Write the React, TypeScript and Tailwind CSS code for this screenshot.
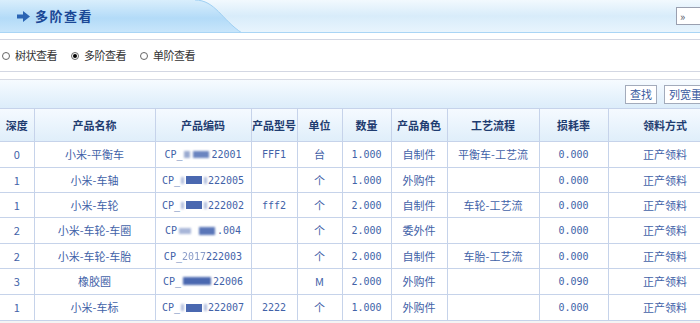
import React from "react";

const F = { fontFamily: '"Noto Sans CJK SC", "Noto Sans", sans-serif' } as React.CSSProperties;
const M = { fontFamily: '"DejaVu Sans Mono", monospace' } as React.CSSProperties;

type Row = { d: string; name: string; a: string; b: string; c: string; model: string; unit: string; qty: string; role: string; flow: string; loss: string; h: string };

const rows: Row[] = [
  { d: "0", name: "小米-平衡车", a: "CP_", b: "a", c: "22001", model: "FFF1", unit: "台", qty: "1.000", role: "自制件", flow: "平衡车-工艺流", loss: "0.000", h: "h-[26px]" },
  { d: "1", name: "小米-车轴", a: "CP_", b: "b", c: "222005", model: "", unit: "个", qty: "1.000", role: "外购件", flow: "", loss: "0.000", h: "h-[25px]" },
  { d: "1", name: "小米-车轮", a: "CP_", b: "b", c: "222002", model: "fff2", unit: "个", qty: "2.000", role: "自制件", flow: "车轮-工艺流", loss: "0.000", h: "h-[25px]" },
  { d: "2", name: "小米-车轮-车圈", a: "CP", b: "c", c: ".004", model: "", unit: "个", qty: "2.000", role: "委外件", flow: "", loss: "0.000", h: "h-[26px]" },
  { d: "2", name: "小米-车轮-车胎", a: "CP_", b: "d", c: "222003", model: "", unit: "个", qty: "2.000", role: "自制件", flow: "车胎-工艺流", loss: "0.000", h: "h-[25px]" },
  { d: "3", name: "橡胶圈", a: "CP_", b: "e", c: "22006", model: "", unit: "M", qty: "2.000", role: "外购件", flow: "", loss: "0.090", h: "h-[26px]" },
  { d: "1", name: "小米-车标", a: "CP_", b: "b", c: "222007", model: "2222", unit: "个", qty: "1.000", role: "外购件", flow: "", loss: "0.000", h: "h-[26px]" },
];

function Blur({ k }: { k: string }) {
  if (k === "a")
    return (
      <span className="inline-flex items-center gap-[3px] mx-[2px]">
        <span className="inline-block w-[6px] h-[7px] bg-[#9aaad0] blur-[1px]" />
        <span className="inline-block w-[16px] h-[7px] bg-[#6a84c0] blur-[1px]" />
      </span>
    );
  if (k === "c")
    return (
      <span className="inline-flex items-center gap-[8px] mx-[2px]">
        <span className="inline-block w-[12px] h-[6px] bg-[#a8b6d8] blur-[1px]" />
        <span className="inline-block w-[16px] h-[8px] bg-[#5a76b8] blur-[1px]" />
      </span>
    );
  if (k === "d") return <span className="text-[#8a9cc8] blur-[0.5px]">2017</span>;
  if (k === "e") return <span className="inline-block w-[28px] h-[8px] mx-[2px] bg-[#4a68b0] blur-[1px]" />;
  return (
    <span className="inline-flex items-center mx-[1px] gap-[2px]">
      <span className="inline-block w-[3px] h-[7px] bg-[#b0bcdc] blur-[1px]" />
      <span className="inline-block w-[16px] h-[8px] bg-[#4a68b0] blur-[0.5px]" />
      <span className="inline-block w-[3px] h-[7px] bg-[#b0bcdc] blur-[1px]" />
    </span>
  );
}

function Radio({ on, label }: { on?: boolean; label: string }) {
  return (
    <div className="flex items-center gap-[5px]">
      <span className="w-[8px] h-[8px] rounded-full border border-[#666] bg-white flex items-center justify-center">
        {on && <span className="w-[4px] h-[4px] rounded-full bg-black" />}
      </span>
      <span className="text-[11px] text-[#333] leading-none tracking-[-0.5px]">{label}</span>
    </div>
  );
}

const cols = [34, 121, 96, 46, 45, 49, 56, 92, 69, 114];
const heads = ["深度", "产品名称", "产品编码", "产品型号", "单位", "数量", "产品角色", "工艺流程", "损耗率", "领料方式"];

export default function App() {
  return (
    <div className="w-[700px] h-[323px] overflow-hidden bg-[#f4f4f4] relative" style={F}>
      <div className="bg-white">
        {/* title bar */}
        <div className="relative h-[33px] border-b border-[#a9d5f5] bg-gradient-to-b from-[#f2f9fe] via-[#d8ecfa] to-[#e8f4fd] overflow-hidden">
          <svg className="absolute left-0 top-0" width="260" height="33" viewBox="0 0 260 33">
            <defs>
              <linearGradient id="lg" x1="0" y1="0" x2="0" y2="1">
                <stop offset="0" stopColor="#d9eefc" />
                <stop offset="0.55" stopColor="#b3dbf8" />
                <stop offset="1" stopColor="#c9e6fb" />
              </linearGradient>
            </defs>
            <path d="M0 0 H195 C215 0 222 20 242 33 H0 Z" fill="url(#lg)" />
            <path d="M195 0 C215 0 222 20 242 33" fill="none" stroke="#9fd0f3" strokeWidth="1" />
          </svg>
          <div className="relative flex items-center h-full pl-[17px] gap-[5px]">
            <svg width="13" height="11" viewBox="0 0 13 11">
              <path d="M0 3.5 H6 V0 L13 5.5 L6 11 V7.5 H0 Z" fill="#2a64b4" />
            </svg>
            <span className="text-[13px] font-bold text-[#1b4896] tracking-[1.5px]">多阶查看</span>
          </div>
          <div className="absolute left-[676px] top-[7px] w-[30px] h-[18px] border border-[#9aa0b0] bg-white text-[11px] text-[#556] leading-[16px] pl-[3px]">»</div>
        </div>
        <div className="h-[6px]" />
        <div className="h-[33px] border-y border-[#d3d7e3] flex items-center pl-[2px] gap-[14px]">
          <Radio label="树状查看" />
          <Radio on label="多阶查看" />
          <Radio label="单阶查看" />
        </div>
        <div className="h-[7px]" />
        {/* toolbar */}
        <div className="h-[29px] border-t border-[#d6dae4] bg-gradient-to-b from-[#f6fbff] to-[#dcedfa] flex items-center justify-end gap-[7px]">
          <div className="h-[19px] px-[4px] border border-[#a3abbb] bg-white text-[11px] text-[#3a5aa0] leading-[17px]">查找</div>
          <div className="h-[19px] w-[36px] pl-[4px] border border-r-0 border-[#a3abbb] bg-white text-[11px] text-[#3a5aa0] leading-[17px] whitespace-nowrap overflow-hidden">列宽重</div>
        </div>
      </div>
      <table className="border-collapse table-fixed w-[722px] bg-white">
        <colgroup>
          {cols.map((w, i) => (
            <col key={i} style={{ width: w }} />
          ))}
        </colgroup>
        <thead>
          <tr className="h-[33px] bg-gradient-to-b from-[#f5faff] to-[#dfeefa]">
            {heads.map((h, i) => (
              <th key={i} className={`border border-[#c6d3ea] text-[11px] font-bold text-[#1f3c70] text-center p-0 whitespace-nowrap ${i === 0 ? "border-l-0" : ""}`}>
                {h}
              </th>
            ))}
          </tr>
        </thead>
        <tbody className="text-[11px] text-[#4262a8]">
          {rows.map((r, i) => (
            <tr key={i} className={r.h}>
              <td className="border border-l-0 border-[#c6d3ea] text-center p-0">{r.d}</td>
              <td className="border border-[#c6d3ea] text-center p-0 whitespace-nowrap">{r.name}</td>
              <td className="border border-[#c6d3ea] text-center p-0 text-[10px] whitespace-nowrap" style={M}>
                {r.a}
                <Blur k={r.b} />
                {r.c}
              </td>
              <td className="border border-[#c6d3ea] text-center p-0 text-[10px]" style={M}>{r.model}</td>
              <td className="border border-[#c6d3ea] text-center p-0">{r.unit}</td>
              <td className="border border-[#c6d3ea] text-center p-0 text-[10px]" style={M}>{r.qty}</td>
              <td className="border border-[#c6d3ea] text-center p-0">{r.role}</td>
              <td className="border border-[#c6d3ea] text-center p-0 whitespace-nowrap">{r.flow}</td>
              <td className="border border-[#c6d3ea] text-center p-0 text-[10px]" style={M}>{r.loss}</td>
              <td className="border border-[#c6d3ea] text-center p-0">正产领料</td>
            </tr>
          ))}
        </tbody>
      </table>
    </div>
  );
}
